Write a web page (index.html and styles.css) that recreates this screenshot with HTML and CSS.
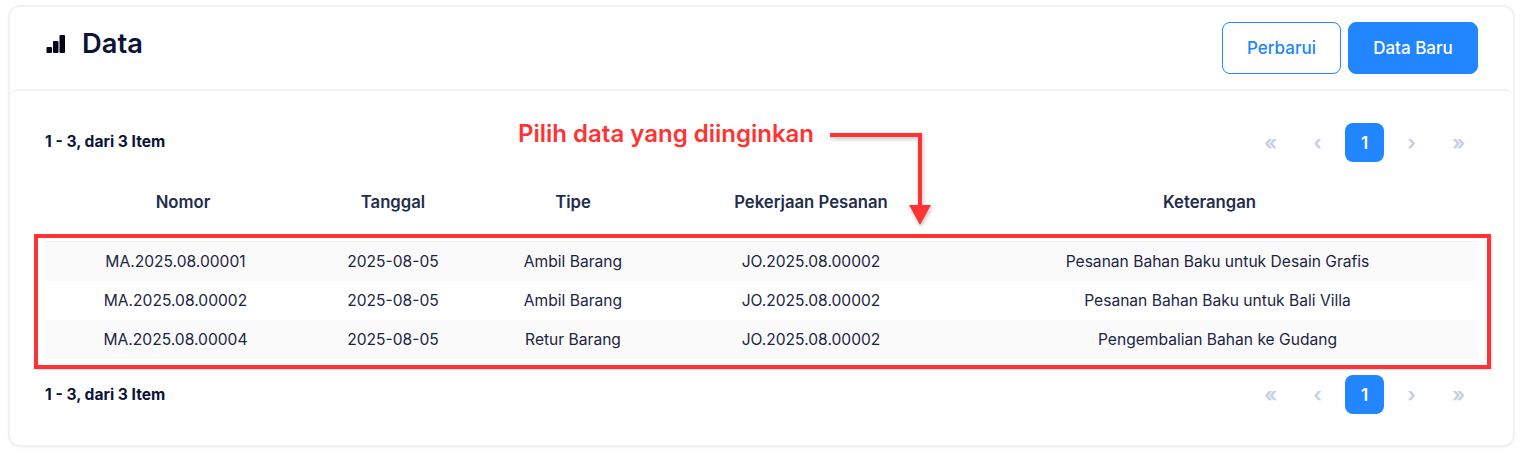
FILE: index.html
```html
<!DOCTYPE html>
<html lang="id">
<head>
<meta charset="utf-8">
<title>Data</title>
<link rel="stylesheet" href="styles.css">
</head>
<body>
<main class="card">
  <header class="card-head">
    <h1 class="title">
      <svg class="title-icon" width="20" height="19" viewBox="0 0 20 19" aria-hidden="true">
        <rect x="0.500" y="12" width="5.500" height="6" rx="1" fill="#020617"/>
        <rect x="7" y="6" width="5.500" height="12" rx="1" fill="#020617"/>
        <rect x="13.500" y="0" width="5.500" height="18" rx="1" fill="#020617"/>
      </svg>
      Data
    </h1>
    <div class="actions">
      <button class="btn btn-outline">Perbarui</button>
      <button class="btn btn-solid">Data Baru</button>
    </div>
  </header>
  <section class="card-body">
    <div class="bar bar-top">
      <span class="count count-top">1 - 3, dari 3 Item</span>
      <nav class="pager">
        <span class="pg">«</span><span class="pg">‹</span><span class="pg pg-on">1</span><span class="pg">›</span><span class="pg">»</span>
      </nav>
    </div>
    <table class="grid">
      <colgroup><col class="c1"><col class="c2"><col class="c3"><col class="c4"><col class="c5"></colgroup>
      <thead>
        <tr><th class="th-first">Nomor</th><th>Tanggal</th><th>Tipe</th><th>Pekerjaan Pesanan</th><th class="th-last">Keterangan</th></tr>
      </thead>
      <tbody>
        <tr><td class="td-first">MA.2025.08.00001</td><td>2025-08-05</td><td>Ambil Barang</td><td>JO.2025.08.00002</td><td class="td-last">Pesanan Bahan Baku untuk Desain Grafis</td></tr>
        <tr><td class="td-first">MA.2025.08.00002</td><td>2025-08-05</td><td>Ambil Barang</td><td>JO.2025.08.00002</td><td class="td-last">Pesanan Bahan Baku untuk Bali Villa</td></tr>
        <tr><td class="td-first">MA.2025.08.00004</td><td>2025-08-05</td><td>Retur Barang</td><td>JO.2025.08.00002</td><td class="td-last">Pengembalian Bahan ke Gudang</td></tr>
      </tbody>
    </table>
    <div class="bar bar-bottom">
      <span class="count">1 - 3, dari 3 Item</span>
      <nav class="pager">
        <span class="pg">«</span><span class="pg">‹</span><span class="pg pg-on">1</span><span class="pg">›</span><span class="pg">»</span>
      </nav>
    </div>
  </section>
</main>
<div class="note">Pilih data yang diinginkan</div>
<svg class="arrow" width="110" height="100" viewBox="0 0 110 100" aria-hidden="true">
  <path d="M0 5H90V76" fill="none" stroke="#ff3333" stroke-width="4"/>
  <path d="M79 75H101L90 95Z" fill="#ff3333"/>
</svg>
<div class="frame"></div>
</body>
</html>
```
FILE: styles.css
```css
* { box-sizing: border-box; }
html, body { margin: 0; padding: 0; }
body {
  width: 1526px;
  height: 454px;
  overflow: hidden;
  background: #fff;
  padding: 5px 11px 0 8px;
  font-family: Inter, "Liberation Sans", sans-serif;
  color: #1c2544;
  position: relative;
}
.card {
  height: 442px;
  border-radius: 12px;
  background: #fff;
  border: 2px solid #f2f2f4;
  box-shadow: 0 1px 2px rgba(20, 30, 60, .05);
  display: flex;
  flex-direction: column;
}
.card-head {
  height: 82px;
  flex: none;
  display: flex;
  justify-content: space-between;
  padding: 15px 35px 0 36px;
}
.title {
  margin: 0;
  height: 44px;
  display: flex;
  align-items: center;
  font-size: 27.300px;
  font-weight: 600;
  color: #0b1437;
  line-height: 44px;
}
.title-icon { margin-right: 16px; }
.actions { display: flex; gap: 7px; }
.btn {
  height: 52px;
  border-radius: 8px;
  font: 500 17px Inter, "Liberation Sans", sans-serif;
  cursor: pointer;
}
.btn-outline { width: 119px; background: #fff; color: #2186ff; border: 1px solid #2186ff; }
.btn-solid { width: 130px; background: #2186ff; color: #fff; border: 1px solid #2186ff; }
.card-body {
  flex: 1;
  padding: 0 35px 0 35px;
  min-height: 0;
  border-top: 2px solid #f2f2f4;
  border-radius: 8px 8px 0 0;
}
.bar {
  display: flex;
  justify-content: space-between;
  align-items: center;
  height: 39px;
}
.bar-top { margin-top: 32px; }
.bar-bottom { margin-top: 16px; }
.count { font-size: 15.600px; font-weight: 700; color: #0b1437; }
.count-top { margin-bottom: 2px; }
.pager { display: flex; gap: 8px; }
.pg {
  width: 39px;
  height: 39px;
  border-radius: 8px;
  display: flex;
  align-items: center;
  justify-content: center;
  font-size: 20px;
  font-weight: 700;
  color: #c9cfe0;
}
.pg-on { background: #2186ff; color: #fff; font-size: 17px; font-weight: 600; }
.grid {
  width: 1433px;
  table-layout: fixed;
  border-collapse: separate;
  border-spacing: 0;
}
.c1 { width: 262px; }
.c2 { width: 172px; }
.c3 { width: 188px; }
.c4 { width: 288px; }
.c5 { width: 523px; }
th {
  height: 80px;
  padding: 0;
  text-align: center;
  font-size: 16.700px;
  font-weight: 600;
  color: #232d4b;
  border-bottom: 1px solid #f2f2f4;
}
.th-first { padding-left: 14px; }
.th-last { padding-right: 14px; }
td {
  height: 39px;
  padding: 0;
  text-align: center;
  font-size: 15.600px;
  font-weight: 400;
  color: #1c2544;
}
.td-first { padding-right: 1px; }
.td-last { padding-left: 2px; }
tbody tr:nth-child(odd) td { background: #fafafa; }
.note {
  position: absolute;
  left: 518px;
  top: 119px;
  font-size: 24px;
  line-height: 30px;
  font-weight: 600;
  color: #ff3333;
}
.arrow {
  position: absolute;
  left: 830px;
  top: 130px;
  filter: drop-shadow(1px 2px 2px rgba(0, 0, 0, .25));
}
.frame {
  position: absolute;
  left: 34px;
  top: 234px;
  width: 1457px;
  height: 135px;
  border: 4px solid #ff3333;
  box-shadow: 1px 1px 2px rgba(0, 0, 0, .15);
}
```
